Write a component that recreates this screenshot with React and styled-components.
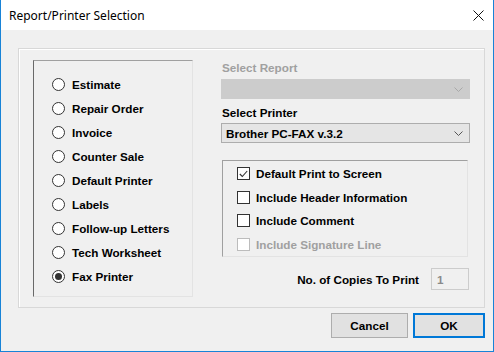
import React from "react";
import styled, { createGlobalStyle } from "styled-components";

const Global = createGlobalStyle`
  html, body { margin: 0; padding: 0; background: #f0f0f0; }
  body { width: 494px; height: 352px; overflow: hidden; }
`;

const Window = styled.div`
  box-sizing: border-box;
  width: 494px;
  height: 352px;
  border: 1px solid #1883d7;
  border-top: none;
  background: #f0f0f0;
  display: flex;
  flex-direction: column;
  font-family: "Liberation Sans", Arial, sans-serif;
`;

const TitleBar = styled.div`
  height: 30px;
  flex: none;
  background: #ffffff;
  display: flex;
  align-items: center;
  justify-content: space-between;
  padding: 0 9px 0 8px;
  font-family: "Noto Sans", "Open Sans", sans-serif;
  font-size: 12px;
  color: #000;
`;

const Body = styled.div`
  padding: 18px 0 0 17px;
  display: flex;
  flex-direction: column;
`;

const OuterGroup = styled.div`
  box-sizing: border-box;
  width: 467px;
  height: 260px;
  border: 1px solid #d8d8d8;
  box-shadow: inset 1px 1px 0 #ffffff;
  padding: 0 0 0 14px;
  display: flex;
  align-items: flex-start;
  gap: 28px;
`;

const SunkenPanel = styled.div`
  box-sizing: border-box;
  border-top: 1px solid #a0a0a0;
  border-left: 1px solid #696969;
  border-right: 1px solid #e3e3e3;
  border-bottom: 1px solid #e3e3e3;
`;

const RadioPanel = styled(SunkenPanel)`
  width: 160px;
  height: 237px;
  margin-top: 11px;
  padding: 11px 0 0 18px;
  display: flex;
  flex-direction: column;
`;

const Label = styled.label`
  display: flex;
  align-items: center;
  height: 24px;
  gap: ${(p) => p.$gap || 7}px;
  font-size: 11.7px;
  font-weight: bold;
  color: ${(p) => (p.$disabled ? "#a0a0a0" : "#000")};
  white-space: nowrap;
`;

const Circle = styled.span`
  box-sizing: border-box;
  width: 13px;
  height: 13px;
  border-radius: 50%;
  border: 1px solid #333333;
  background: #ffffff;
  display: flex;
  align-items: center;
  justify-content: center;
  flex: none;
  &::after {
    content: "";
    width: 7px;
    height: 7px;
    border-radius: 50%;
    background: ${(p) => (p.$on ? "#333333" : "transparent")};
  }
`;

const Box = styled.span`
  box-sizing: border-box;
  width: 13px;
  height: 13px;
  border: 1px solid ${(p) => (p.$disabled ? "#bcbcbc" : "#333333")};
  background: #ffffff;
  display: flex;
  align-items: center;
  justify-content: center;
  flex: none;
`;

const RightCol = styled.div`
  width: 249px;
  padding-top: 12px;
  display: flex;
  flex-direction: column;
`;

const FieldLabel = styled.div`
  height: 14px;
  line-height: 14px;
  font-size: 11.7px;
  font-weight: bold;
  color: ${(p) => (p.$disabled ? "#a0a0a0" : "#000")};
  margin-top: ${(p) => p.$mt || 0}px;
  margin-left: 1px;
`;

const Combo = styled.div`
  box-sizing: border-box;
  height: 20px;
  margin-top: ${(p) => p.$mt || 0}px;
  border: 1px solid ${(p) => (p.$disabled ? "#cccccc" : "#adadad")};
  background: ${(p) => (p.$disabled ? "#cccccc" : "#e5e5e5")};
  display: flex;
  align-items: center;
  justify-content: space-between;
  padding: 0 6px 0 4px;
  font-size: 11.7px;
  font-weight: bold;
  color: #000;
`;

const CheckPanel = styled(SunkenPanel)`
  width: 246px;
  height: 97px;
  margin: 17px 0 0 1px;
  padding: 1px 0 0 14px;
  display: flex;
  flex-direction: column;
  border-left-color: #a0a0a0;
`;

const CopiesRow = styled.div`
  margin: 11px 1px 0 0;
  display: flex;
  justify-content: flex-end;
  align-items: center;
  gap: 12px;
  font-size: 11.7px;
  font-weight: bold;
`;

const NumBox = styled.div`
  box-sizing: border-box;
  width: 38px;
  height: 22px;
  border: 1px solid #cccccc;
  background: #f0f0f0;
  color: #8a8a8a;
  font-size: 11.7px;
  font-weight: bold;
  display: flex;
  align-items: center;
  padding-left: 5px;
`;

const Buttons = styled.div`
  margin-top: 5px;
  padding-right: 8px;
  display: flex;
  justify-content: flex-end;
  gap: 5px;
`;

const Button = styled.button`
  box-sizing: border-box;
  width: ${(p) => p.$w}px;
  height: 25px;
  border: ${(p) => (p.$default ? "2px solid #0078d7" : "1px solid #adadad")};
  background: #e1e1e1;
  font-family: "Liberation Sans", Arial, sans-serif;
  font-size: 11.7px;
  font-weight: bold;
  color: #000;
  padding: 0;
  margin: 0;
`;

const Chevron = ({ color }) => (
  <svg width="9" height="5" viewBox="0 0 9 5">
    <path d="M0.5 0.5 L4.5 4.5 L8.5 0.5" fill="none" stroke={color} strokeWidth="1" />
  </svg>
);

const radios = [
  "Estimate",
  "Repair Order",
  "Invoice",
  "Counter Sale",
  "Default Printer",
  "Labels",
  "Follow-up Letters",
  "Tech Worksheet",
  "Fax Printer",
];

const checks = [
  { t: "Default Print to Screen", on: true },
  { t: "Include Header Information" },
  { t: "Include Comment" },
  { t: "Include Signature Line", disabled: true },
];

export default function App() {
  return (
    <>
      <Global />
      <Window>
        <TitleBar>
          <span>Report/Printer Selection</span>
          <svg width="11" height="11" viewBox="0 0 11 11">
            <path d="M0.5 0.5 L10.5 10.5 M10.5 0.5 L0.5 10.5" stroke="#111" strokeWidth="1" />
          </svg>
        </TitleBar>
        <Body>
          <OuterGroup>
            <RadioPanel>
              {radios.map((r) => (
                <Label key={r}>
                  <Circle $on={r === "Fax Printer"} />
                  {r}
                </Label>
              ))}
            </RadioPanel>
            <RightCol>
              <FieldLabel $disabled>Select Report</FieldLabel>
              <Combo $disabled $mt={4}>
                <span />
                <Chevron color="#a8a8a8" />
              </Combo>
              <FieldLabel $mt={7}>Select Printer</FieldLabel>
              <Combo $mt={3}>
                <span>Brother PC-FAX v.3.2</span>
                <Chevron color="#555555" />
              </Combo>
              <CheckPanel>
                {checks.map((c) => (
                  <Label key={c.t} $gap={6} $disabled={c.disabled}>
                    <Box $disabled={c.disabled}>
                      {c.on && (
                        <svg width="9" height="8" viewBox="0 0 9 8">
                          <path d="M0.8 4 L3.3 6.5 L8.2 1" fill="none" stroke="#333" strokeWidth="1.1" />
                        </svg>
                      )}
                    </Box>
                    {c.t}
                  </Label>
                ))}
              </CheckPanel>
              <CopiesRow>
                <span>No. of Copies To Print</span>
                <NumBox>1</NumBox>
              </CopiesRow>
            </RightCol>
          </OuterGroup>
          <Buttons>
            <Button $w={77}>Cancel</Button>
            <Button $w={72} $default>OK</Button>
          </Buttons>
        </Body>
      </Window>
    </>
  );
}
